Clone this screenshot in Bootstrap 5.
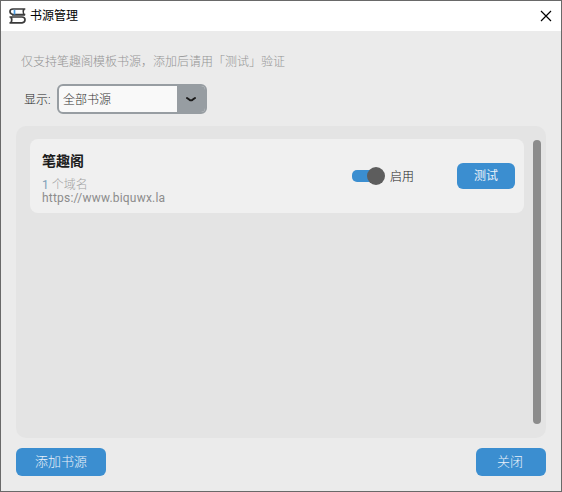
<!DOCTYPE html>
<html lang="zh-CN">
<head>
<meta charset="utf-8">
<meta name="viewport" content="width=device-width, initial-scale=1">
<title>书源管理</title>
<link href="https://cdn.jsdelivr.net/npm/bootstrap@5.3.0/dist/css/bootstrap.min.css" rel="stylesheet">
<style>
body{font-family:Roboto,"Noto Sans CJK SC",sans-serif;font-size:12px;line-height:16px;color:#444;overflow:hidden}
.app-window{height:492px;background:#ebebeb;border:1px solid #696969}
.title-bar{height:30px;background:#fff;color:#000;padding:0 9px 0 8px}
.title-bar svg,.picker svg,.btn svg{display:block}
.app-name{margin-left:5px}
.close-x{width:12px;height:12px}
.hint{color:#949494;font-weight:300;margin:23px 0 0 20px}
.filter-row{margin:14px 0 0 23px}
.filter-label{width:33px;padding-top:2px;font-weight:300;color:#222}
.picker{width:150px;height:30px;border:2px solid #979da2;border-radius:6px;background:#f9f9f9;color:#333;font-weight:300;line-height:28px;padding:0 0 0 4px;overflow:hidden}
.picker-arrow{width:28px;background:#979da2}
.source-panel{margin:12px 15px 0;height:312px;background:#e4e4e4;border-radius:10px;padding:13px 5px 14px 14px}
.source-card{width:494px;height:74px;background:#f0f0f0;border-radius:8px;padding:0 9px 0 12px}
.source-name{font-size:14px;line-height:18px;font-weight:700;color:#1c1c1c;margin-top:13px}
.domain-count{line-height:14px;margin-top:8px;color:#a3a3a3;font-weight:300}
.domain-count span{color:#7f9fb8;font-weight:400}
.source-url{font-size:12px;line-height:14px;margin-top:-1px;color:#8c8c8c;letter-spacing:.2px}
.toggle-svg{display:block;margin-right:4px}
.toggle-label{padding-top:2px;font-weight:300;color:#222}
.btn-app{--bs-btn-bg:#3b8ed0;--bs-btn-color:#e9f1f9;--bs-btn-hover-bg:#36719f;--bs-btn-hover-color:#fff;--bs-btn-border-width:0;--bs-btn-border-radius:6px;--bs-btn-padding-x:0;--bs-btn-padding-y:0;--bs-btn-font-size:13px;--bs-btn-font-weight:300;--bs-btn-line-height:28px;height:28px}
.btn-test{--bs-btn-font-size:12px;--bs-btn-font-weight:400;--bs-btn-line-height:26px;width:58px;height:26px;margin-left:43px}
.btn-add{width:90px}
.btn-close-window{width:70px;padding-right:2px}
.scroll-thumb{width:8px;height:284px;margin-top:1px;background:#8c8c8c}
.footer-row{margin:10px 15px 0}
</style>
</head>
<body>
<div class="app-window d-flex flex-column">
  <header class="title-bar d-flex align-items-center justify-content-between">
    <div class="d-flex align-items-center">
      <svg width="17" height="18" viewBox="0 0 17 18" fill="none" stroke="#3a3a3a" stroke-width="1.7"><path d="M3 8.500H16" stroke="#777" stroke-width="1"/><path d="M16.300 2H4Q1 2 1 4.500T4 7.500H16.300M14.800 2Q13.500 4.500 14.800 7.500M.500 10H13Q16 10 16 12.700T13 15.800H.500M2 10Q3.500 12.500 2 15.800"/><path d="M5.500 2.800V7.500" stroke="#4a9be0"/></svg>
      <span class="ms-1">书源管理</span>
    </div>
    <svg class="close-x" viewBox="0 0 12 12" stroke="#000" stroke-width="1.2"><path d="M1 1L11 11M11 1L1 11"/></svg>
  </header>
  <div class="hint">仅支持笔趣阁模板书源，添加后请用「测试」验证</div>
  <div class="filter-row d-flex align-items-center">
    <span class="filter-label">显示:</span>
    <div class="picker d-flex justify-content-between">
      <span>全部书源</span>
      <span class="picker-arrow d-flex align-items-center justify-content-center"><svg width="12" height="6" viewBox="0 0 12 6" fill="none" stroke="#1b1b1b" stroke-width="2" stroke-linecap="round" stroke-linejoin="round"><path d="M2 2L4.500 3.800Q6 4.800 7.500 3.800L10 2"/></svg></span>
    </div>
  </div>
  <main class="source-panel d-flex justify-content-between">
    <div class="source-card d-flex justify-content-between">
      <div>
        <div class="source-name">笔趣阁</div>
        <div class="domain-count"><span>1</span> 个域名</div>
        <div class="source-url">https://www.biquwx.la</div>
      </div>
      <div class="d-flex align-items-center">
        <svg class="toggle-svg" width="34" height="18" viewBox="0 0 34 18"><rect x="0" y="3" width="32" height="12" rx="5" fill="#3b8ed0"/><circle cx="24" cy="9" r="9" fill="#5d5d5d"/></svg>
        <span class="toggle-label">启用</span>
        <button type="button" class="btn btn-app btn-test">测试</button>
      </div>
    </div>
    <div class="scroll-thumb rounded-pill"></div>
  </main>
  <footer class="footer-row d-flex justify-content-between">
    <button type="button" class="btn btn-app btn-add">添加书源</button>
    <button type="button" class="btn btn-app btn-close-window">关闭</button>
  </footer>
</div>
<script src="https://cdn.jsdelivr.net/npm/bootstrap@5.3.0/dist/js/bootstrap.bundle.min.js"></script>
</body>
</html>
